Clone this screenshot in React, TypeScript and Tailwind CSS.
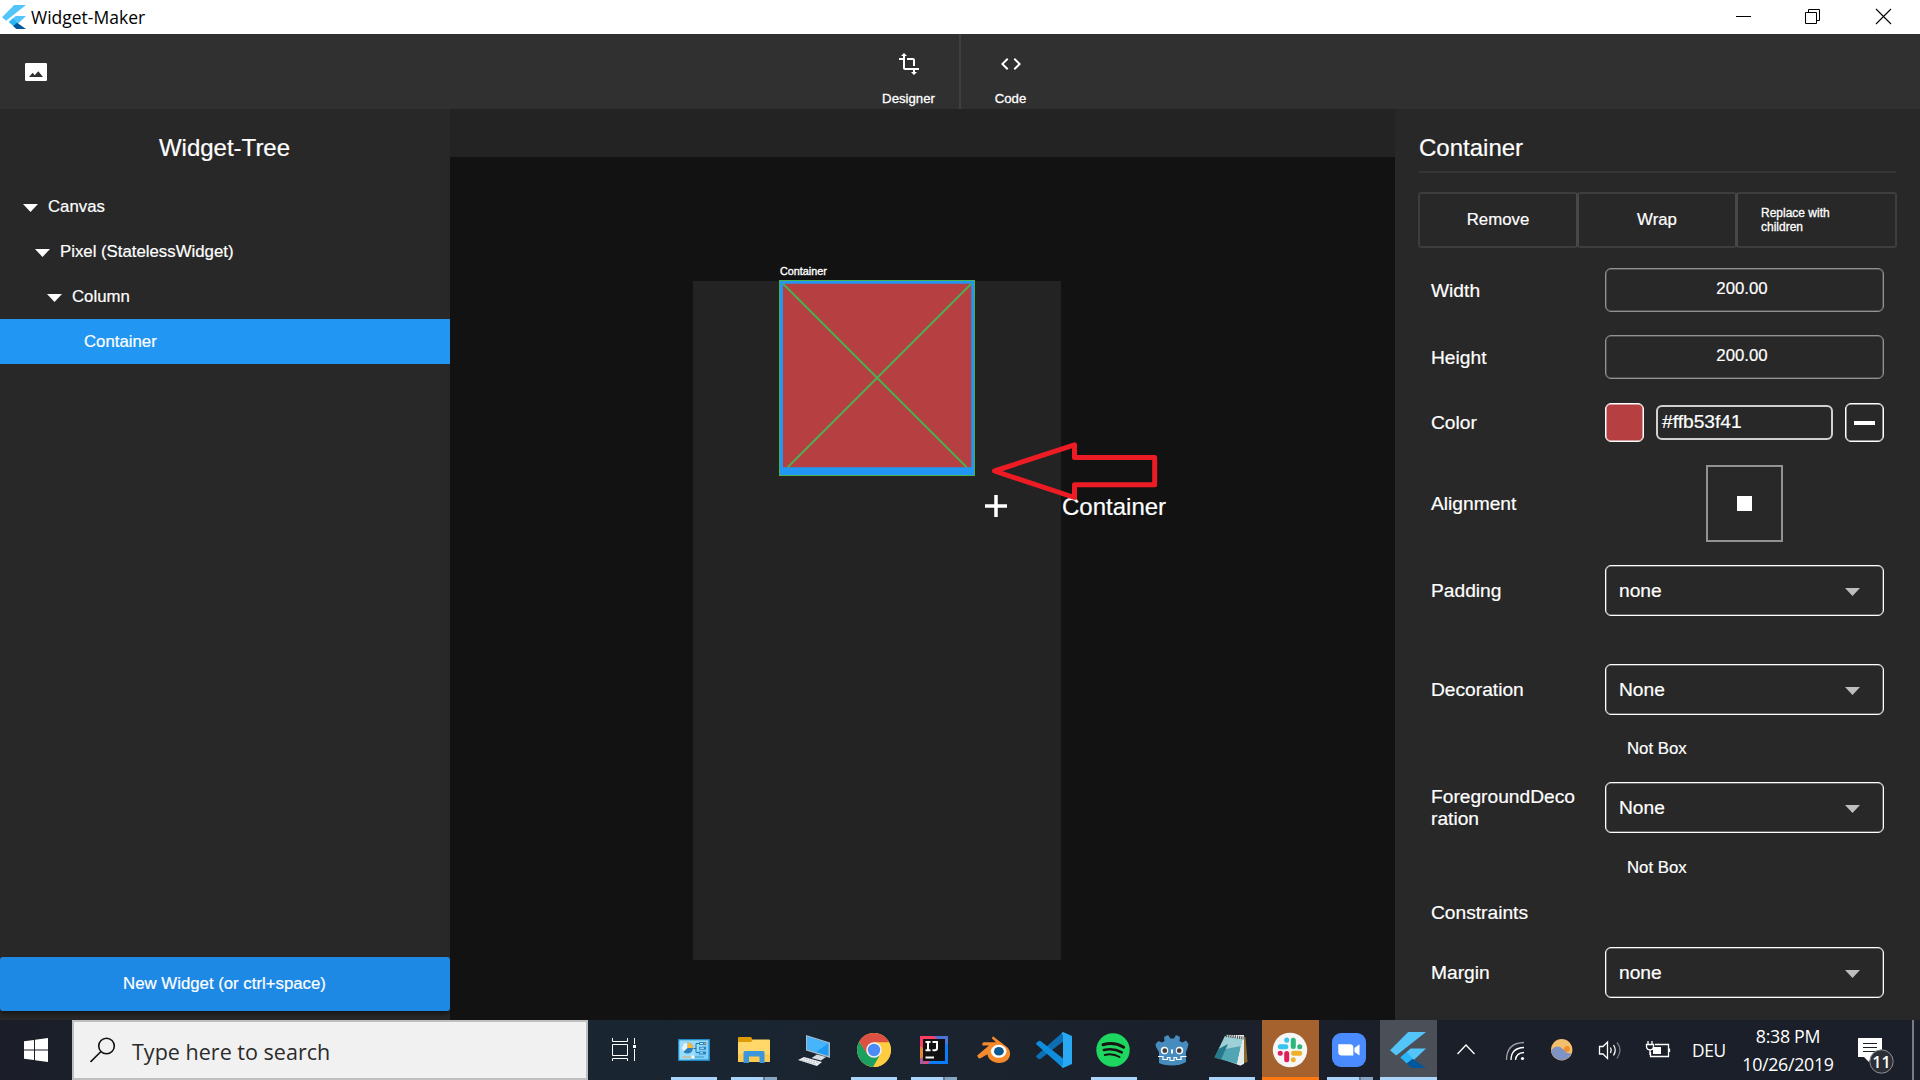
import React from "react";
import { MdCode, MdTransform } from "react-icons/md";

const UI = "font-['Open_Sans','Noto_Sans',sans-serif]";

function FlutterLogo({ size }: { size: number }) {
  return (
    <svg width={size} height={size} viewBox="0 0 36 36" className="block">
      <path d="M0 18.2 L18.2 0 H36 L6.2 23.6 Z" fill="#54c5f8" />
      <path d="M20.5 16.4 H36 L21.5 30.2 L17.5 30.6 L10.6 25.6 Z" fill="#54c5f8" />
      <path d="M10.4 25.4 L16.6 20 L22.6 26.6 L16.8 31.6 Z" fill="#29b6f6" />
      <path d="M16.6 31.6 L22.6 26.8 L36 36 H21.5 Z" fill="#01579b" />
    </svg>
  );
}

function TitleBar() {
  return (
    <header className="flex h-[34px] items-center bg-white pl-[2px]">
      <FlutterLogo size={24} />
      <span className={`ml-[5px] text-[17.500px] leading-[34px] text-black ${UI}`}>Widget-Maker</span>
      <div className="ml-auto flex pr-[1px]">
        <svg width="200" height="34" viewBox="0 0 200 34" fill="none" stroke="#000" className="block">
          <path d="M17 16.5h15" />
          <path d="M86.500 12.500h11v11h-11z M89.500 12v-2.500h11v11h-2.500" />
          <path d="M157 9l15 15M172 9l-15 15" strokeWidth="1.100" />
        </svg>
      </div>
    </header>
  );
}

function Toolbar() {
  return (
    <div className="flex h-[75px] bg-[#303030] text-white">
      <div className="flex w-[858px] items-center pl-[25px]">
        <svg width="22" height="18" viewBox="0 0 22 18" className="block">
          <rect width="22" height="18" rx="1.300" fill="#fff" />
          <path d="M4 14L7.700 9.800L9.700 12.200L13.300 8.300L18 14Z" fill="#303030" />
        </svg>
      </div>
      <button className="flex w-[101px] flex-col items-center pt-[18px]">
        <MdTransform size={24} />
        <span className="mt-[15px] text-[13.200px] leading-4 [-webkit-text-stroke:0.300px_#fff]">Designer</span>
      </button>
      <div className="w-[2px] bg-[#404040]" />
      <button className="flex w-[99px] flex-col items-center pt-[18px]">
        <MdCode size={24} />
        <span className="mt-[15px] text-[13.200px] leading-4 [-webkit-text-stroke:0.300px_#fff]">Code</span>
      </button>
    </div>
  );
}

function Caret({ color }: { color: string }) {
  return (
    <svg width="15" height="8" viewBox="0 0 15 8" className="block shrink-0">
      <path d="M0 0H15L7.500 8Z" fill={color} />
    </svg>
  );
}

function WidgetTree() {
  return (
    <aside className="flex w-[450px] flex-col bg-[#282828] text-[16.800px] text-white [-webkit-text-stroke:0.200px_#fff]">
      <h2 className="mt-[25px] pr-px text-center text-2xl leading-7">Widget-Tree</h2>
      <div className="mt-[22px]">
        <div className="flex h-[45px] items-center gap-[10.500px] pl-[22.500px]">
          <span className="mt-[3px]"><Caret color="#fff" /></span>
          <span>Canvas</span>
        </div>
        <div className="flex h-[45px] items-center gap-[10.500px] pl-[34.500px]">
          <span className="mt-[3px]"><Caret color="#fff" /></span>
          <span>Pixel (StatelessWidget)</span>
        </div>
        <div className="flex h-[45px] items-center gap-[10.500px] pl-[46.500px]">
          <span className="mt-[3px]"><Caret color="#fff" /></span>
          <span>Column</span>
        </div>
        <div className="flex h-[45px] items-center bg-[#2196f3] pl-[84px]">Container</div>
      </div>
      <button className="mt-auto mb-[9px] h-[54px] rounded-[3px] bg-[#1e88e5] pr-px text-center shadow-md shadow-black/40">
        New Widget (or ctrl+space)
      </button>
    </aside>
  );
}

function Stage() {
  return (
    <main className="flex w-[945px] flex-col bg-[#121212]">
      <div className="h-12 bg-[#232323]" />
      <div className="relative mt-[124px] ml-[243px] h-[679px] w-[368px] bg-[#232323]">
        <span className="absolute top-[-16px] left-[87px] text-[10.800px] leading-3 text-white [-webkit-text-stroke:0.350px_#fff]">
          Container
        </span>
        <svg className="absolute top-[-2px] left-[86px]" width="197" height="198" viewBox="0 0 197 198">
          <rect x="0" y="1" width="196" height="196" fill="#4caf50" />
          <rect x="1" y="2" width="194" height="194" fill="#2196f3" />
          <rect x="4" y="4.700" width="188.300" height="183.500" fill="#b53f41" />
          <path d="M4 4.700L187.700 188.200M192.300 4.700L8.700 188.200" stroke="#4caf50" strokeWidth="2" />
        </svg>
        <svg className="absolute top-[214px] left-[292px]" width="22" height="22" viewBox="0 0 22 22">
          <path d="M11 0V22M0 11H22" stroke="#fff" strokeWidth="3.500" />
        </svg>
        <span className="absolute top-[210px] left-[369px] text-2xl leading-8 text-white [-webkit-text-stroke:0.200px_#fff]">
          Container
        </span>
        <svg className="absolute top-[155px] left-[290px]" width="180" height="70" viewBox="983 436 180 70">
          <path
            d="M994.500 471L1074.500 444.800V457.500H1154.700V484.800H1074.500V497.500Z"
            fill="none"
            stroke="#ed1c24"
            strokeWidth="5"
            strokeLinejoin="round"
          />
        </svg>
      </div>
    </main>
  );
}

function Label({ children, low }: { children: React.ReactNode; low?: boolean }) {
  return (
    <div className={`${low ? "mt-[2px]" : ""} w-[174px] shrink-0 pr-[28px] leading-[22px] break-all`}>{children}</div>
  );
}

function NumberField({ value }: { value: string }) {
  return (
    <div className="h-[44px] w-[279px] rounded-[6px] border border-[#929292] pr-[5px] text-center text-[16.800px] leading-[40px] shadow-[inset_0_0_0_0.500px_#777]">
      {value}
    </div>
  );
}

function Dropdown({ value }: { value: string }) {
  return (
    <div className="flex h-[51px] w-[279px] items-center justify-between rounded-[6px] border border-white pr-[23px] pl-[13px] shadow-[inset_0_0_0_0.500px_#aaa]">
      <span className="mt-px">{value}</span>
      <span className="mt-[2px]">
        <Caret color="#bebebe" />
      </span>
    </div>
  );
}

function Inspector() {
  return (
    <aside className="w-[525px] bg-[#282828] pt-[25px] text-[19.200px] text-white [-webkit-text-stroke:0.200px_#fff]">
      <h2 className="ml-6 text-2xl leading-7">Container</h2>
      <div className="mt-[9px] ml-6 h-[2px] w-[477px] bg-[#353535]" />
      <div className="mt-[19px] ml-[23px] flex h-[56px] w-[479px] text-[16.800px]">
        <button className="w-[160px] rounded-[3px] border-2 border-[#3d3d3d] border-r-[#484848]">Remove</button>
        <button className="-ml-px w-[160px] rounded-[3px] border-2 border-[#3d3d3d] border-x-[#484848]">Wrap</button>
        <button className="-ml-px w-[161px] rounded-[3px] border-2 border-[#3d3d3d] border-l-[#484848] pl-[23px] text-left text-xs leading-[14px] [-webkit-text-stroke:0.300px_#fff]">
          Replace with
          <br />
          children
        </button>
      </div>
      <div className="ml-9">
        <div className="mt-5 flex items-center">
          <Label low>Width</Label>
          <NumberField value="200.00" />
        </div>
        <div className="mt-[23px] flex items-center">
          <Label low>Height</Label>
          <NumberField value="200.00" />
        </div>
        <div className="mt-6 flex items-center">
          <Label>Color</Label>
          <div className="h-[39px] w-[39px] rounded-[6px] border border-white bg-[#b53f41] shadow-[inset_0_0_0_0.500px_#fff]" />
          <div className="ml-[12px] h-[35px] w-[177px] rounded-[6px] border-2 border-[#d0d0d0] pl-[4px] leading-[29px]">#ffb53f41</div>
          <button className="ml-[12px] flex h-[39px] w-[39px] items-center justify-center rounded-[6px] border border-white shadow-[inset_0_0_0_0.500px_#fff]">
            <span className="h-[4px] w-[21px] bg-white" />
          </button>
        </div>
        <div className="mt-[23px] flex items-center">
          <Label>Alignment</Label>
          <div className="ml-[101px] flex h-[77px] w-[77px] items-center justify-center border-2 border-[#929292]">
            <div className="h-[15px] w-[15px] bg-white" />
          </div>
        </div>
        <div className="mt-[23px] flex items-center">
          <Label>Padding</Label>
          <Dropdown value="none" />
        </div>
        <div className="mt-[48px] flex items-center">
          <Label>Decoration</Label>
          <Dropdown value="None" />
        </div>
        <div className="mt-[23px] ml-[196px] text-[16.800px] leading-[22px]">Not Box</div>
        <div className="mt-[22px] flex items-center">
          <Label>ForegroundDecoration</Label>
          <Dropdown value="None" />
        </div>
        <div className="mt-[24px] ml-[196px] text-[16.800px] leading-[22px]">Not Box</div>
        <div className="mt-[23px] leading-[22px]">Constraints</div>
        <div className="mt-[23px] flex items-center">
          <Label>Margin</Label>
          <Dropdown value="none" />
        </div>
      </div>
    </aside>
  );
}

const icons: Record<string, React.ReactNode> = {
  panel: (
    <svg width="36" height="36" viewBox="0 0 36 36">
      <rect x="2" y="7" width="32" height="22" fill="#2389c2" />
      <rect x="3.500" y="8.500" width="29" height="19" fill="#7fd0fa" />
      <path d="M3.500 8.500H32.500L14 27.500H3.500Z" fill="#9adcfc" />
      <circle cx="11.500" cy="16" r="5.500" fill="#2a7fb8" />
      <path d="M11.500 16V10.500A5.500 5.500 0 0 1 17 16Z" fill="#ffb92e" />
      <path d="M11.500 16V10.500A5.500 5.500 0 0 0 7.500 19.800Z" fill="#e3f4fd" />
      <path d="M17.500 16.500H20V11.500H23M20 16V20.500H23" stroke="#1b76ae" fill="none" />
      <path d="M23 10h7v3h-7zM23 14.700h7v3h-7zM23 19.400h7v3h-7z" fill="#2a86bd" />
      <path d="M24 11.500h3M24 16.200h4M24 20.900h3" stroke="#cdeeff" />
      <path d="M28 11.500h1.500" stroke="#ff9d3b" strokeWidth="1.500" />
      <path d="M6 25H16" stroke="#d8b070" strokeWidth="1" />
      <path d="M18 25H28" stroke="#3e97c9" strokeWidth="1" />
      <rect x="15.500" y="23.500" width="3" height="3" fill="#fff" />
    </svg>
  ),
  folder: (
    <svg width="36" height="36" viewBox="0 0 36 36">
      <path d="M2 6q0-1 1-1h12l2 3v4H2z" fill="#dd9c07" />
      <path d="M2 10h13l2-2.500h16q1 0 1 1V29q0 1-1 1H3q-1 0-1-1z" fill="#ffd869" />
      <path d="M2 22h32v7q0 1-1 1H3q-1 0-1-1z" fill="#fdcb50" />
      <path d="M7.500 31V20.500q0-1.500 1.500-1.500h18q1.500 0 1.500 1.500V31h-5v-6.500h-10.500V31z" fill="#3b96dc" />
    </svg>
  ),
  computer: (
    <svg width="36" height="36" viewBox="0 0 36 36">
      <path d="M10 3L34 10.500V26L10 18.500Z" fill="#a9bdc8" />
      <path d="M11 4.500L32.500 11.200V24L11 17.200Z" fill="#1e9cf5" />
      <path d="M11 4.500L32.500 11.200L20 20L11 17.200Z" fill="#47b5fc" />
      <path d="M21 22.500L30 25L25 28.500L15.500 26Z" fill="#d3dbe0" />
      <path d="M2 28L8 25L26 30L21 34Z" fill="#eef1f3" />
      <path d="M5 28L20 32M8 26.500L23 31" stroke="#a8b1b8" strokeDasharray="1.500 1" />
    </svg>
  ),
  chrome: (
    <svg width="36" height="36" viewBox="0 0 36 36">
      <circle cx="18" cy="18" r="17" fill="#ffcd40" />
      <path d="M3.300 9.500A17 17 0 0 0 17 35L24.500 22L18 18L11.500 21.700Z" fill="#1ba15f" />
      <path d="M18 35A17 17 0 0 0 33 10.200H18L24.800 22Z" fill="#ffcd40" />
      <path d="M3.300 9.500L11 22L18 10.200H33A17 17 0 0 0 3.300 9.500Z" fill="#dd5144" />
      <circle cx="18" cy="18" r="7.800" fill="#f1f1f1" />
      <circle cx="18" cy="18" r="6.200" fill="#4c8bf5" />
    </svg>
  ),
  intellij: (
    <svg width="36" height="36" viewBox="0 0 36 36">
      <path d="M4 4H22L14 32H4Z" fill="#fc3e64" />
      <path d="M4 16L10 20V32H4Z" fill="#a85a9a" />
      <path d="M4 14L8 17L7 25L4 27Z" fill="#e08a3a" />
      <path d="M19 4H32V32H12L25 12Z" fill="#087cfa" />
      <path d="M18 4H32V12H27Z" fill="#4d73d8" />
      <rect x="7" y="7" width="22" height="22" fill="#111" />
      <path
        d="M9.500 10H14.500M12 10V18.300M9.500 18.300H14.500M16.500 10H21V16Q21 18.300 18.800 18.300H16.500"
        stroke="#fff"
        strokeWidth="2"
        fill="none"
      />
      <path d="M9.500 25.500H18" stroke="#fff" strokeWidth="2" />
    </svg>
  ),
  blender: (
    <svg width="36" height="36" viewBox="0 0 36 36">
      <path
        d="M17.300 4.500L31.500 15.500C35 19 35 24.500 31.500 28C27 32 18.500 32 14 27.500C12 25.500 11.500 23.500 11.500 22.300L4 26.500Q1.500 26 1.200 23.500L13 13.500H6.500Q5.500 11.500 7.500 10.200H20L16 6.500Q16 4.500 17.300 4.500Z"
        fill="#f58a2c"
      />
      <ellipse cx="22.700" cy="19.300" rx="7.800" ry="6.500" fill="#fff" />
      <ellipse cx="22.900" cy="19.200" rx="4.900" ry="4.300" fill="#09588f" />
    </svg>
  ),
  vscode: (
    <svg width="36" height="36" viewBox="0 0 36 36">
      <path d="M0.500 23.500Q-0.300 24.500 0.700 25.500L3 27.200L4.500 27L27 9.500V0Z" fill="#0c6fb4" />
      <path d="M0.500 12.500Q-0.300 11.500 0.700 10.500L3 8.800L4.500 9L27 26.500V36Z" fill="#0f8ddb" />
      <path d="M27 0L36 4V32L27 36L25.500 34.500L27 33V3L25.500 1.500Z" fill="#29a9f4" />
    </svg>
  ),
  spotify: (
    <svg width="36" height="36" viewBox="0 0 36 36" fill="none" stroke="#191414" strokeLinecap="round">
      <circle cx="18" cy="18" r="16.700" fill="#1ed760" stroke="none" />
      <path d="M8 12.800Q19 9.500 28.700 15.200" strokeWidth="3" />
      <path d="M8.800 18Q18.500 15.500 26.800 20.400" strokeWidth="2.500" />
      <path d="M9.800 23Q17.500 21 24.500 25" strokeWidth="2" />
    </svg>
  ),
  godot: (
    <svg width="36" height="36" viewBox="0 0 36 36">
      <path
        d="M5 31V20L2 15L1.500 12L4.500 9L8 10.500L10.500 9L10 5L14 3L16.500 6.500H20L22 3L26 5L25.500 9L28.500 10.500L32 8.500L34.500 12L33.500 16L32 20V30Q26 33.500 18 33.500Q9 33 5 31Z"
        fill="#478cbf"
      />
      <circle cx="10.500" cy="18.500" r="3.700" fill="#fff" />
      <circle cx="25.500" cy="18.500" r="3.700" fill="#fff" />
      <circle cx="10.800" cy="18.700" r="2.400" fill="#414042" />
      <circle cx="25.200" cy="18.700" r="2.400" fill="#414042" />
      <path d="M18 17.500V21.500" stroke="#fff" strokeWidth="2" />
      <path
        d="M4 24.500H9V27.500H13.500V25.500H16V28.500H20V25.500H22.500V27.500H27V24.500H32.500"
        stroke="#fff"
        strokeWidth="1.200"
        fill="none"
      />
    </svg>
  ),
  notepad: (
    <svg width="36" height="36" viewBox="0 0 36 36">
      <path d="M28 4L32.500 5L34.500 30L28 32Z" fill="#8a6a2c" />
      <path d="M13 3H31L31 32L27 33.500L12 28Z" fill="#e9f0f1" />
      <path d="M12 4L29.500 7L24 32L1.500 25.500Z" fill="#52a5b3" />
      <path d="M12 4L29.500 7L28 14L5 18.500Z" fill="#9dd0d7" />
      <path d="M5.500 17L15 12L8 27.500L1.500 25.500Z" fill="#27788a" />
      <path d="M28.500 12L24 32L28 33.500L31 30V8Z" fill="#e4ebed" />
      <path d="M13 3.500L31 6" stroke="#555" strokeWidth="3" strokeDasharray="1.200 1" />
    </svg>
  ),
  slack: (
    <svg width="36" height="36" viewBox="0 0 36 36">
      <circle cx="18" cy="18" r="17.200" fill="#f6f6f6" />
      <g strokeWidth="5" strokeLinecap="round">
        <path d="M8.300 14.700H13.800M14.700 8.200V8.100" stroke="#36c5f0" />
        <path d="M21.300 8.300V14.500M27.700 14.700H27.800" stroke="#2eb67d" />
        <path d="M21.500 21.300H27.700M21.300 27.700V27.800" stroke="#ecb22e" />
        <path d="M14.700 21.500V27.700M8.300 21.300H8.200" stroke="#e01e5a" />
      </g>
    </svg>
  ),
  zoom: (
    <svg width="36" height="36" viewBox="0 0 36 36">
      <rect x="1" y="1" width="34" height="34" rx="9" fill="#4a8cff" />
      <path d="M7.300 12.200H19Q22.300 12.200 22.300 15.500V23.600H11Q7.300 23.600 7.300 20Z" fill="#fff" />
      <path d="M23.500 16L28.500 12.200V23.600L23.500 20Z" fill="#fff" />
    </svg>
  ),
  flutter: <FlutterLogo size={36} />,
};

type App = { id: string; wide?: boolean; bar?: "one" | "stack" | "full" | "alert"; bg?: string };

const apps: App[] = [
  { id: "panel", wide: true, bar: "one" },
  { id: "folder", wide: true, bar: "stack" },
  { id: "computer", wide: true },
  { id: "chrome", wide: true, bar: "one" },
  { id: "intellij", wide: true, bar: "stack" },
  { id: "blender", wide: true },
  { id: "vscode", wide: true },
  { id: "spotify", bar: "one" },
  { id: "godot" },
  { id: "notepad", bar: "one" },
  { id: "slack", bar: "alert", bg: "bg-[#a6622e]" },
  { id: "zoom", bar: "stack" },
  { id: "flutter", bar: "full", bg: "bg-[#4b4f58]" },
];

function TaskApp({ app }: { app: App }) {
  return (
    <div className={`${app.wide ? "w-[60px] px-[2px]" : "w-[59px] px-px"} h-[60px]`}>
      <div className={`flex h-full flex-col items-center pt-[12px] ${app.bg ?? ""}`}>
        <div className={app.wide ? "" : "mr-px"}>{icons[app.id]}</div>
        <div className="mt-auto flex h-[3px] w-full justify-center">
          {app.bar === "one" && <div className="w-[46px] bg-[#a9d4fb]" />}
          {app.bar === "stack" && (
            <>
              <div className="w-[32px] bg-[#a9d4fb]" />
              <div className="w-[2px] bg-[#64788c]" />
              <div className="w-[12px] bg-[#88a5c1]" />
            </>
          )}
          {app.bar === "full" && <div className="w-full bg-[#a9d4fb]" />}
          {app.bar === "alert" && <div className="w-full bg-[#ff770f]" />}
        </div>
      </div>
    </div>
  );
}

function Taskbar() {
  return (
    <footer
      className={`flex h-[60px] bg-linear-to-r from-[#1b1e28] from-0% via-[#192632] via-35% to-[#1b1f29] to-70% text-white ${UI}`}
    >
      <div className="flex w-[72px] items-center justify-center">
        <svg width="24" height="24" viewBox="0 0 24 24" fill="#fff">
          <path d="M0 3.300L10 1.900V11.400H0ZM11 1.800L24 0V11.400H11ZM0 12.400H10V22L0 20.700ZM11 12.400H24V24L11 22.200Z" />
        </svg>
      </div>
      <div className="flex w-[516px] items-center border-2 border-[#bfbfbf] bg-[#f1f1f1] pl-4">
        <svg width="26" height="26" viewBox="0 0 26 26" fill="none" stroke="#111" strokeWidth="1.600">
          <circle cx="16.500" cy="9" r="7.800" />
          <path d="M11 14.500L0.500 25" />
        </svg>
        <span className="mt-[4px] ml-[16px] text-[21.500px] tracking-[0.020px] text-[#2b2b2b]">Type here to search</span>
      </div>
      <div className="flex w-[76px] pt-[18px] pl-6">
        <svg width="25" height="24" viewBox="0 0 25 24" fill="none" stroke="#fff">
          <path d="M0.500 0V3.500H15.500V0M0.500 6.500H15.500V17.500H0.500ZM0.500 23V20.500H15.500V23M22.500 0V6M22.500 11V23" />
          <path d="M21 7h3v3h-3z" fill="#fff" stroke="none" />
        </svg>
      </div>
      <div className="flex">
        {apps.map((a) => (
          <TaskApp key={a.id} app={a} />
        ))}
      </div>
      <div className="flex w-[254px] shrink-0 pt-[18px] pl-[17px]">
        <svg width="220" height="26" viewBox="1455 1038 220 26" fill="none" stroke="#fff" strokeWidth="1.300">
          <path d="M1457.500 1054L1466 1045L1474.500 1054" />
          <path d="M1506.500 1060Q1506.500 1043 1524 1042.500" stroke="#9a9da3" />
          <path d="M1511 1060Q1511 1048 1524 1047.500M1515.500 1060Q1516 1053 1524 1052.500" />
          <circle cx="1522.500" cy="1058.500" r="1.600" fill="#fff" stroke="none" />
          <circle cx="1561.700" cy="1049.700" r="10.700" fill="#f5c06d" stroke="none" />
          <circle cx="1567" cy="1049" r="3" fill="#f08f2d" stroke="none" />
          <path
            d="M1551 1050.500Q1557 1043 1564 1050Q1567 1054 1571.500 1053.500A10.700 10.700 0 0 1 1551 1050.500Z"
            fill="#7f93c4"
            stroke="none"
          />
          <path d="M1599.500 1046.500H1603L1607.500 1042V1058.500L1603 1054H1599.500Z" />
          <path d="M1610.500 1047.500Q1612 1050 1610.500 1053M1613.500 1045Q1617 1050 1613.500 1055.500" />
          <path d="M1617 1042.500Q1623 1050 1617 1058.500" stroke="#767a82" />
          <path d="M1655 1044.500H1668.500V1056.500H1650.500V1052M1669.500 1048.500V1052" />
          <path d="M1653 1047H1661V1054H1653Z" fill="#fff" stroke="none" />
          <path
            d="M1648 1041V1044M1652 1041V1044M1646.500 1044.500H1653.500V1047Q1653 1050 1650 1050Q1647 1050 1646.500 1047ZM1650 1050V1055"
            fill="#1b1f29"
          />
        </svg>
      </div>
      <div className="flex w-[34px] shrink-0 items-center pt-[2px] text-[17.300px] tracking-[-0.300px]">DEU</div>
      <div className="ml-[2px] flex w-[120px] shrink-0 flex-col items-center pt-[2px] text-[17.800px] leading-[28px] tracking-[-0.300px]">
        <span>8:38 PM</span>
        <span>10/26/2019</span>
      </div>
      <div className="shrink-0 pt-[16px] pl-[8px]">
        <svg width="40" height="38" viewBox="1856 1036 40 38">
          <path d="M1858 1038H1882V1057H1871L1869 1062L1864 1057H1858Z" fill="#fff" />
          <path d="M1863 1043.500H1877M1863 1047.500H1877M1863 1051.500H1877" stroke="#1b1f29" strokeWidth="1.200" />
          <circle cx="1881.500" cy="1061.500" r="11.700" fill="#2c2f36" stroke="#8d8f94" />
          <text x="1881.500" y="1067.500" textAnchor="middle" fontFamily="Open Sans" fontWeight="600" fontSize="16" fill="#fff">
            11
          </text>
        </svg>
      </div>
      <div className="mr-[6px] ml-auto w-[2px] bg-[#797c82]" />
    </footer>
  );
}

export default function App() {
  return (
    <div className="flex h-[1080px] w-[1920px] flex-col overflow-hidden font-['Liberation_Sans',Arial,sans-serif]">
      <TitleBar />
      <Toolbar />
      <div className="flex h-[911px]">
        <WidgetTree />
        <Stage />
        <Inspector />
      </div>
      <Taskbar />
    </div>
  );
}
